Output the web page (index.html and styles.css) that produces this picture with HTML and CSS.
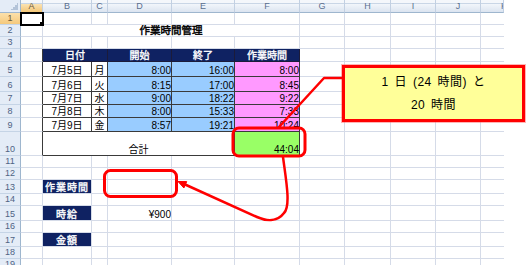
FILE: index.html
```html
<!DOCTYPE html>
<html lang="ja">
<head>
<meta charset="utf-8">
<title>作業時間管理</title>
<link rel="stylesheet" href="styles.css">
</head>
<body>
<table class="sheet">
  <colgroup>
    <col class="w-rh"><col class="w-a"><col class="w-b"><col class="w-c"><col class="w-d"><col class="w-e"><col class="w-f"><col class="w-g"><col class="w-h"><col class="w-i"><col class="w-j"><col class="w-k">
  </colgroup>
  <thead>
    <tr class="h-hdr">
      <th class="corner"></th>
      <th class="ch ch-sel">A</th><th class="ch">B</th><th class="ch">C</th><th class="ch">D</th><th class="ch">E</th><th class="ch">F</th><th class="ch">G</th><th class="ch">H</th><th class="ch">I</th><th class="ch">J</th><th class="ch ch-k">K</th>
    </tr>
  </thead>
  <tbody>
    <tr class="h11"><th class="rh rh-sel">1</th><td class="active"></td><td></td><td></td><td></td><td></td><td></td><td></td><td></td><td></td><td></td><td></td></tr>
    <tr class="h12"><th class="rh">2</th><td></td><td class="title" colspan="5">作業時間管理</td><td></td><td></td><td></td><td></td><td></td></tr>
    <tr class="h11"><th class="rh">3</th><td></td><td></td><td></td><td></td><td></td><td></td><td></td><td></td><td></td><td></td><td></td></tr>
    <tr class="h13"><th class="rh">4</th><td class="rd"></td><td class="hd" colspan="2">日付</td><td class="hd">開始</td><td class="hd">終了</td><td class="hd">作業時間</td><td></td><td></td><td></td><td></td><td></td></tr>
    <tr class="h15"><th class="rh">5</th><td class="rd"></td><td class="bx c">7月5日</td><td class="bx c">月</td><td class="bx blue r">8:00</td><td class="bx blue r">16:00</td><td class="bx pink r">8:00</td><td></td><td></td><td></td><td></td><td></td></tr>
    <tr class="h15"><th class="rh">6</th><td class="rd"></td><td class="bx c">7月6日</td><td class="bx c">火</td><td class="bx blue r">8:15</td><td class="bx blue r">17:00</td><td class="bx pink r">8:45</td><td></td><td></td><td></td><td></td><td></td></tr>
    <tr class="h13"><th class="rh">7</th><td class="rd"></td><td class="bx c">7月7日</td><td class="bx c">水</td><td class="bx blue r">9:00</td><td class="bx blue r">18:22</td><td class="bx pink r">9:22</td><td></td><td></td><td></td><td></td><td></td></tr>
    <tr class="h13"><th class="rh">8</th><td class="rd"></td><td class="bx c">7月8日</td><td class="bx c">木</td><td class="bx blue r">8:00</td><td class="bx blue r">15:33</td><td class="bx pink r">7:33</td><td></td><td></td><td></td><td></td><td></td></tr>
    <tr class="h14"><th class="rh">9</th><td class="rd"></td><td class="bx c">7月9日</td><td class="bx c">金</td><td class="bx blue r">8:57</td><td class="bx blue r">19:21</td><td class="bx pink r">10:24</td><td></td><td></td><td></td><td></td><td></td></tr>
    <tr class="h24"><th class="rh">10</th><td class="rd"></td><td class="bx c mid" colspan="4">合計</td><td class="bx green r mid">44:04</td><td></td><td></td><td></td><td></td><td></td></tr>
    <tr class="h12"><th class="rh">11</th><td></td><td></td><td></td><td></td><td></td><td></td><td></td><td></td><td></td><td></td><td></td></tr>
    <tr class="h11"><th class="rh">12</th><td></td><td></td><td></td><td></td><td></td><td></td><td></td><td></td><td></td><td></td><td></td></tr>
    <tr class="h14"><th class="rh">13</th><td></td><td class="lab">作業時間</td><td></td><td></td><td></td><td></td><td></td><td></td><td></td><td></td><td></td></tr>
    <tr class="h11"><th class="rh">14</th><td></td><td></td><td></td><td></td><td></td><td></td><td></td><td></td><td></td><td></td><td></td></tr>
    <tr class="h15"><th class="rh">15</th><td></td><td class="lab">時給</td><td></td><td class="r">¥900</td><td></td><td></td><td></td><td></td><td></td><td></td><td></td></tr>
    <tr class="h11"><th class="rh">16</th><td></td><td></td><td></td><td></td><td></td><td></td><td></td><td></td><td></td><td></td><td></td></tr>
    <tr class="h14"><th class="rh">17</th><td></td><td class="lab">金額</td><td></td><td></td><td></td><td></td><td></td><td></td><td></td><td></td><td></td></tr>
    <tr class="h12"><th class="rh">18</th><td></td><td></td><td></td><td></td><td></td><td></td><td></td><td></td><td></td><td></td><td></td></tr>
    <tr class="h12"><th class="rh">19</th><td></td><td></td><td></td><td></td><td></td><td></td><td></td><td></td><td></td><td></td><td></td></tr>
  </tbody>
</table>

<div class="callout">
  <div>1 日 (24 時間) と</div>
  <div>20 時間</div>
</div>

<svg class="marks" width="526" height="265" viewBox="0 0 526 265">
  <rect x="233" y="128" width="72" height="28" rx="6" ry="6" class="ring"/>
  <rect x="104.5" y="170.5" width="72" height="26" rx="6" ry="6" class="ring"/>
  <polyline points="342,78 324,78 279,127" class="line"/>
  <path d="M283,157 C286,180 291,206 284,213 C278,221 268,222 257,217 L184,184" class="line"/>
  <polygon points="178,181.5 183.9,188 186.7,181.6" class="head"/>
</svg>
</body>
</html>
```

FILE: styles.css
```css
html, body {
  margin: 0;
  padding: 0;
}

body {
  width: 526px;
  height: 265px;
  overflow: hidden;
  background: #ffffff;
  position: relative;
  font-family: "Liberation Sans", "Noto Sans CJK JP", sans-serif;
  font-size: 10px;
  color: #000;
}

.sheet {
  border-collapse: separate;
  border-spacing: 0;
  table-layout: fixed;
  width: 504px;
}

.w-rh { width: 21px; }
.w-a { width: 22px; }
.w-b { width: 49px; }
.w-c { width: 16px; }
.w-d { width: 64px; }
.w-e { width: 63px; }
.w-f { width: 65px; }
.w-g { width: 45px; }
.w-h { width: 46px; }
.w-i { width: 45px; }
.w-j { width: 45px; }
.w-k { width: 23px; }

.h-hdr { height: 13px; }
.h11 { height: 11px; }
.h12 { height: 12px; }
.h13 { height: 13px; }
.h14 { height: 14px; }
.h15 { height: 15px; }
.h24 { height: 24px; }

.sheet td,
.sheet th {
  box-sizing: border-box;
  padding: 0;
  border-right: 1px solid #d5dbe8;
  border-bottom: 1px solid #d5dbe8;
  line-height: 11px;
  white-space: nowrap;
  overflow: hidden;
  vertical-align: bottom;
  font-weight: normal;
}

.sheet tr > :last-child {
  border-right: none;
}

/* headers */
.corner {
  background-color: #e4ecf7;
  background-image: linear-gradient(135deg, transparent 50%, #b3c3d8 50%);
  background-repeat: no-repeat;
  background-size: 7px 7px;
  background-position: right 2px bottom 2px;
  border-right: 1px solid #9eb6ce !important;
  border-bottom: 1px solid #9eb6ce !important;
}

.ch {
  background: linear-gradient(#f4f7fb 0 3px, #c9d6e6 3px 4px, #f2f6fb 4px, #dbe4f0 100%);
  color: #5a6f8f;
  font-size: 9px;
  text-align: center;
  border-right: 1px solid #c2d0e2 !important;
  border-bottom: 1px solid #9eb6ce !important;
  line-height: 9px;
}

.ch-sel {
  background: linear-gradient(#f4f7fb 0 3px, #c9d6e6 3px 4px, #fbe3b4 4px, #f3c676 100%);
  color: #6b5a3a;
}

.ch-k {
  text-align: left;
  text-indent: 20px;
}

.rh {
  background: #e4ecf7;
  color: #4f6384;
  font-size: 9px;
  text-align: center;
  border-right: 1px solid #9eb6ce !important;
  border-bottom: 1px solid #c5d4e6 !important;
  line-height: 10px;
}

.rh-sel {
  background: linear-gradient(#fbe0ab, #f5c97c);
  color: #6b5a3a;
}

/* active cell A1 */
.active {
  position: relative;
  outline: 2px solid #000;
  outline-offset: -1px;
}

.active::after {
  content: "";
  position: absolute;
  right: -3px;
  bottom: -3px;
  width: 4px;
  height: 4px;
  background: #000;
  border: 1px solid #fff;
}

/* content cells */
.title {
  text-align: center;
  font-weight: bold;
  font-size: 10.5px;
  -webkit-text-stroke: 0.45px #000;
  padding-bottom: 1px;
}

.rd {
  border-right: 1px solid #3a3a3a !important;
}

.hd {
  background: #0f2262;
  color: #fff;
  font-weight: bold;
  -webkit-text-stroke: 0.35px #fff;
  text-align: center;
  border-right: 1px solid #1b1b3a !important;
  border-bottom: 1px solid #1b1b3a !important;
  padding-bottom: 1px;
}

.bx {
  border-right: 1px solid #3a3a3a !important;
  border-bottom: 1px solid #3a3a3a !important;
  padding-bottom: 1px;
}

.c { text-align: center; }
.r { text-align: right; padding-right: 2px; }
.mid { vertical-align: middle; padding-top: 3px; }

.blue { background: #99ccff; }
.pink { background: #ff99ff; }
.green { background: #99ff66; }

.lab {
  background: #0f2262;
  color: #fff;
  font-weight: bold;
  -webkit-text-stroke: 0.35px #fff;
  text-align: center;
  letter-spacing: 1px;
  padding-bottom: 1px;
}

/* overlays */
.callout {
  position: absolute;
  left: 342px;
  top: 65px;
  width: 183px;
  height: 57px;
  box-sizing: border-box;
  border: 3px solid #ff0000;
  box-shadow: 0 0 0 1px rgba(255, 90, 90, 0.45);
  background: #ffff99;
  display: flex;
  flex-direction: column;
  justify-content: center;
  align-items: center;
  font-family: "Liberation Sans", "Noto Sans CJK JP", sans-serif;
  font-size: 12px;
  line-height: 23px;
  letter-spacing: 0.5px;
  word-spacing: 2px;
}

.marks {
  position: absolute;
  left: 0;
  top: 0;
  pointer-events: none;
}

.ring {
  fill: none;
  stroke: #ff0000;
  stroke-width: 3;
}

.line {
  fill: none;
  stroke: #ff0000;
  stroke-width: 2.5;
  stroke-linejoin: round;
  stroke-linecap: round;
}

.head {
  fill: #ff0000;
  stroke: #ff0000;
  stroke-width: 1;
  stroke-linejoin: round;
}
```
